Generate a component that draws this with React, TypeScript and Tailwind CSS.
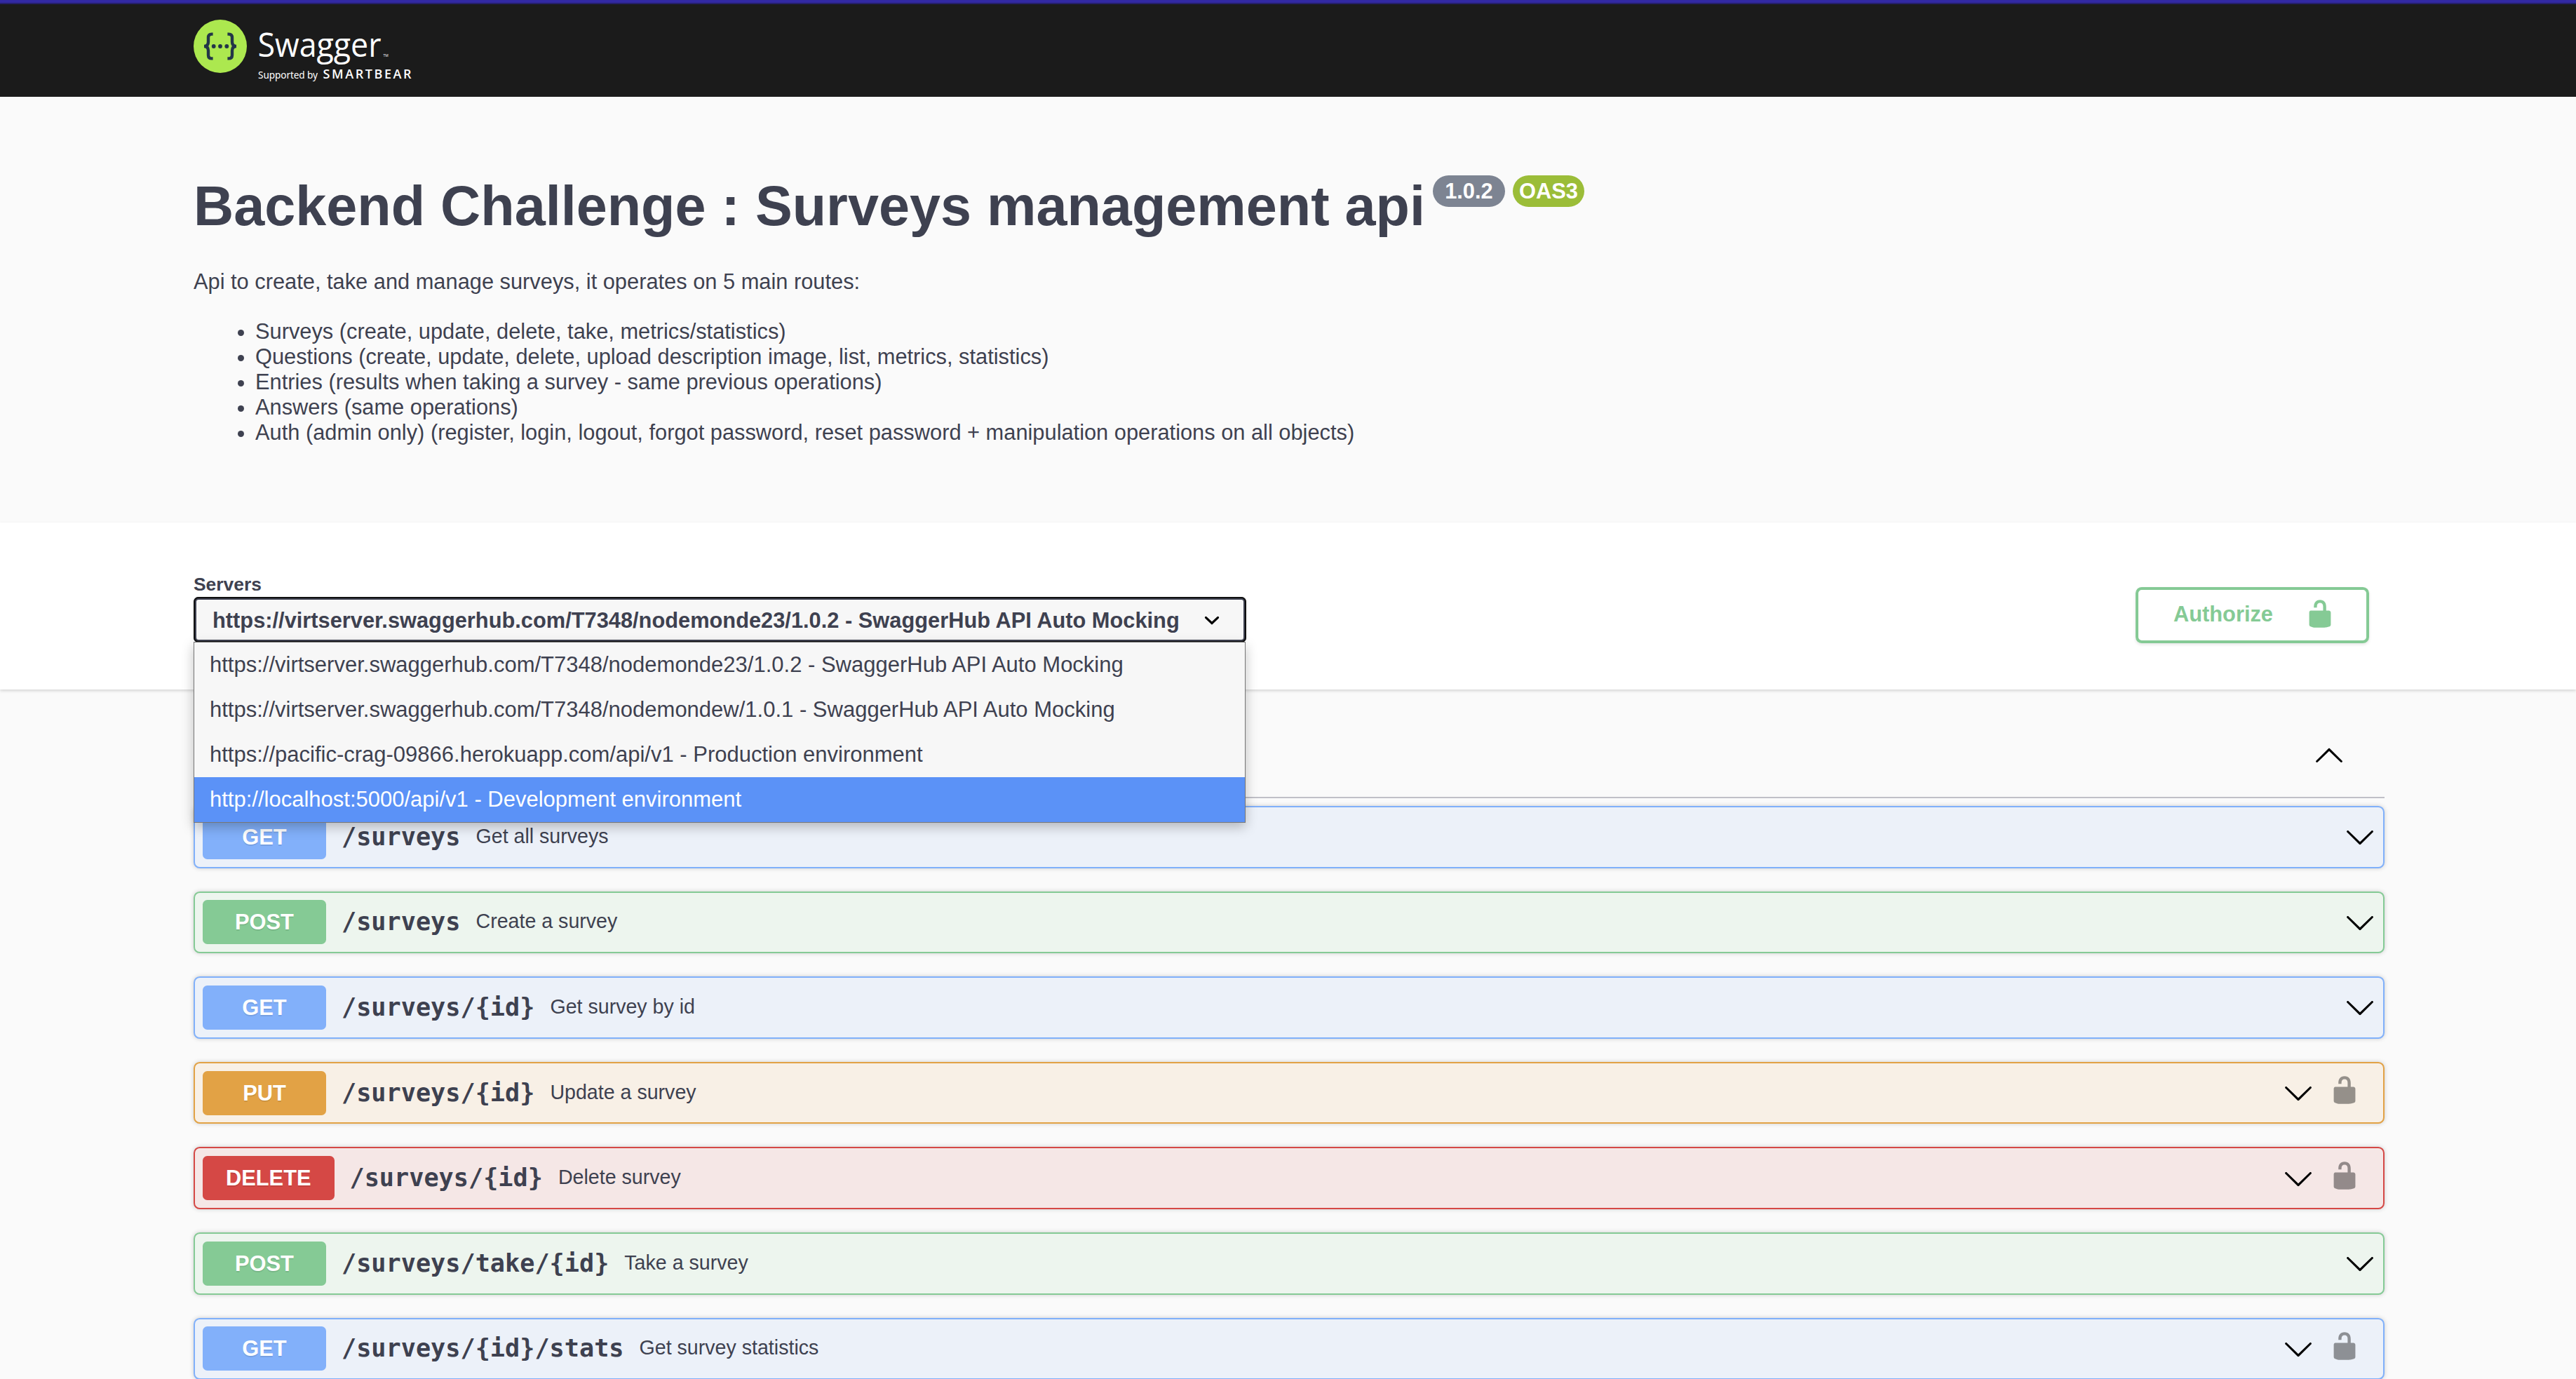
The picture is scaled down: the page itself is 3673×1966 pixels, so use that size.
import React, { useState } from 'react';

type Method = 'GET' | 'POST' | 'PUT' | 'DELETE';

interface Operation {
  method: Method;
  path: string;
  summary: string;
  locked?: boolean;
}

const routes = [
  'Surveys (create, update, delete, take, metrics/statistics)',
  'Questions (create, update, delete, upload description image, list, metrics, statistics)',
  'Entries (results when taking a survey - same previous operations)',
  'Answers (same operations)',
  'Auth (admin only) (register, login, logout, forgot password, reset password + manipulation operations on all objects)',
];

const servers = [
  'https://virtserver.swaggerhub.com/T7348/nodemonde23/1.0.2 - SwaggerHub API Auto Mocking',
  'https://virtserver.swaggerhub.com/T7348/nodemondew/1.0.1 - SwaggerHub API Auto Mocking',
  'https://pacific-crag-09866.herokuapp.com/api/v1 - Production environment',
  'http://localhost:5000/api/v1 - Development environment',
];

const operations: Operation[] = [
  { method: 'GET', path: '/surveys', summary: 'Get all surveys' },
  { method: 'POST', path: '/surveys', summary: 'Create a survey' },
  { method: 'GET', path: '/surveys/{id}', summary: 'Get survey by id' },
  { method: 'PUT', path: '/surveys/{id}', summary: 'Update a survey', locked: true },
  { method: 'DELETE', path: '/surveys/{id}', summary: 'Delete survey', locked: true },
  { method: 'POST', path: '/surveys/take/{id}', summary: 'Take a survey' },
  { method: 'GET', path: '/surveys/{id}/stats', summary: 'Get survey statistics', locked: true },
];

const blockStyles: Record<Method, string> = {
  GET: 'border-[#80b0fa] bg-[#ecf1f9]',
  POST: 'border-[#85ca95] bg-[#edf5ee]',
  PUT: 'border-[#e2a245] bg-[#f8f0e6]',
  DELETE: 'border-[#d54845] bg-[#f5e7e6]',
};

const badgeStyles: Record<Method, string> = {
  GET: 'bg-[#82b0fa]',
  POST: 'bg-[#85ca95]',
  PUT: 'bg-[#e2a245]',
  DELETE: 'bg-[#d54845]',
};

function LockIcon({ className }: { className: string }) {
  return (
    <svg className={className} viewBox="0 0 20 20" fill="currentColor">
      <path d="M15.8 8H14V5.6C14 2.703 12.665 1 10 1 7.334 1 6 2.703 6 5.6V6h2v-.801C8 3.754 8.797 3 10 3c1.203 0 2 .754 2 2.199V8H4c-.553 0-1 .646-1 1.199V17c0 .549.428 1.139.951 1.307l1.197.387C5.672 18.861 6.55 19 7.1 19h5.8c.549 0 1.428-.139 1.951-.307l1.196-.387c.524-.167.953-.757.953-1.306V9.199C17 8.646 16.352 8 15.8 8z" />
    </svg>
  );
}

function ArrowIcon({ className }: { className: string }) {
  return (
    <svg className={className} viewBox="0 0 20 20" fill="black">
      <path d="M17.418 6.109c.272-.268.709-.268.979 0s.271.701 0 .969l-7.908 7.83c-.27.268-.707.268-.979 0l-7.908-7.83c-.27-.268-.27-.701 0-.969.271-.268.709-.268.979 0L10 13.25l7.418-7.141z" />
    </svg>
  );
}

function Logo() {
  return (
    <svg className="w-[320px] h-[90px]" viewBox="0 0 320 90">
      <circle cx="38" cy="38" r="38" fill="#ace84f" />
      <g fill="none" stroke="#233648" strokeWidth="4.4">
        <path d="M27.6 20.6H26c-3.6 0-5 1.7-5 5v6.2c0 4-1.6 6.2-6 6.2c4.4 0 6 2.2 6 6.2v6.2c0 3.3 1.4 5 5 5h1.6" />
        <path d="M48.4 20.6H50c3.6 0 5 1.7 5 5v6.2c0 4 1.6 6.2 6 6.2c-4.4 0-6 2.2-6 6.2v6.2c0 3.3-1.4 5-5 5h-1.6" />
      </g>
      <g fill="#233648">
        <circle cx="28.7" cy="38" r="2.9" />
        <circle cx="38" cy="38" r="2.9" />
        <circle cx="47.3" cy="38" r="2.9" />
      </g>
      <g fill="white">
        <text x="91.5" y="53" textLength="176" lengthAdjust="spacingAndGlyphs" className="font-['Open_Sans',sans-serif] text-[48px]">Swagger</text>
        <text x="270.5" y="53" className="font-['Open_Sans',sans-serif] text-[5px]">TM</text>
        <text x="92" y="84" textLength="85" className="font-['Noto_Sans',sans-serif] text-[13.6px]">Supported by</text>
        <text x="184.5" y="84" textLength="126" className="font-['Open_Sans',sans-serif] text-[18px] font-semibold">SMARTBEAR</text>
      </g>
    </svg>
  );
}

function ServerSelect() {
  const [selected, setSelected] = useState(0);
  const [hovered, setHovered] = useState(3);

  return (
    <div className="relative w-[1501px]">
      <button className="flex items-center justify-between w-full h-[65px] bg-[#f7f7f7] border-4 border-[#3e4150] outline-2 -outline-offset-2 outline-[#101010] rounded-[7px] pl-[23px] pr-[23px] text-left font-bold whitespace-nowrap">
        <span className="pt-[2px]">{servers[selected]}</span>
        <svg className="w-11 h-11" viewBox="0 0 20 20" fill="black">
          <path d="M13.418 7.859a.695.695 0 01.978 0 .68.68 0 010 .969l-3.908 3.83a.697.697 0 01-.979 0l-3.908-3.83a.68.68 0 010-.969.695.695 0 01.978 0L10 11l3.418-3.141z" />
        </svg>
      </button>
      <ul className="absolute z-10 left-0 top-[64px] w-[1500px] bg-[#f7f7f7] border border-[#767676] text-[31px] shadow-[0_6px_16px_rgba(0,0,0,0.25)]">
        {servers.map((server, i) => (
          <li
            key={server}
            onMouseEnter={() => setHovered(i)}
            onClick={() => setSelected(i)}
            className={`h-16 pl-[22px] leading-[63px] whitespace-nowrap cursor-default ${i === hovered ? 'bg-[#5b92f7] text-white' : ''}`}
          >
            {server}
          </li>
        ))}
      </ul>
    </div>
  );
}

function OperationBlock({ method, path, summary, locked }: Operation) {
  return (
    <div className={`flex items-center h-[88.6px] px-[11px] border-2 rounded-[8.8px] shadow-[0_0_6.6px_rgba(0,0,0,0.19)] ${blockStyles[method]}`}>
      <span className={`h-[63px] min-w-[176px] px-[33px] rounded-[6.6px] text-center leading-[63px] font-bold text-white [text-shadow:0_2.2px_0_rgba(0,0,0,0.1)] ${badgeStyles[method]}`}>
        {method}
      </span>
      <span className="px-[22px] pb-[2px] font-['DejaVu_Sans_Mono',monospace] text-[35.2px] leading-[41px] font-bold">{path}</span>
      <span className="pb-[3px] text-[28.6px] leading-[34px]">{summary}</span>
      <ArrowIcon className="w-11 h-11 ml-auto" />
      {locked && <LockIcon className="w-11 h-11 mx-[22px] mb-2 text-black/40" />}
    </div>
  );
}

export default function App() {
  return (
    <div className="h-[1966px] overflow-hidden bg-[#fafafa] text-[#3e4150] font-['Liberation_Sans',Arial,sans-serif] text-[30.8px] leading-9">
      <header className="h-[138px] border-t-4 border-[#3229a3] bg-[#1b1b1b]">
        <div className="h-[2px] bg-[#251f6b]" />
        <div className="pl-[276px] pt-[22px]">
          <Logo />
        </div>
      </header>

      <section className="h-[607px] pl-[276px] pt-[110px]">
        <div className="flex items-start">
          <h1 className="text-[79.2px] leading-[92px] font-bold whitespace-nowrap">Backend Challenge : Surveys management api</h1>
          <div className="flex gap-[11px] ml-[11px] mt-[2px] font-bold text-white">
            <span className="flex items-center justify-center w-[103px] h-[45px] rounded-full bg-[#7d8492]">1.0.2</span>
            <span className="flex items-center justify-center w-[102px] h-[45px] rounded-full bg-[#9bbd38]">OAS3</span>
          </div>
        </div>
        <p className="mt-11">Api to create, take and manage surveys, it operates on 5 main routes:</p>
        <ul className="mt-[35px] pl-[88px] list-disc">
          {routes.map((route) => (
            <li key={route}>{route}</li>
          ))}
        </ul>
      </section>

      <section className="relative flex justify-between h-[238px] pl-[276px] pr-[295px] bg-white shadow-[0_2px_4px_rgba(0,0,0,0.15)]">
        <div className="pt-[70px]">
          <h2 className="h-9 text-[26.4px] font-bold">Servers</h2>
          <ServerSelect />
        </div>
        <button className="flex items-center justify-between w-[333px] h-20 mt-[92px] pl-[50px] pr-[44px] border-4 border-[#85ca95] rounded-[8.8px] text-[#85ca95] font-bold shadow-[0_2px_4px_rgba(0,0,0,0.1)]">
          <span className="-mt-[2px]">Authorize</span>
          <LockIcon className="w-11 h-11 mb-1" />
        </button>
      </section>

      <main className="w-[3124px] ml-[276px]">
        <div className="flex justify-end items-center h-[155px] mb-[11px] pt-[37px] pr-[57px] border-b-2 border-[#c0c0c7]">
          <ArrowIcon className="w-11 h-11 rotate-180" />
        </div>
        <div className="flex flex-col gap-[33px]">
          {operations.map((op) => (
            <OperationBlock key={op.method + op.path} {...op} />
          ))}
        </div>
      </main>
    </div>
  );
}
